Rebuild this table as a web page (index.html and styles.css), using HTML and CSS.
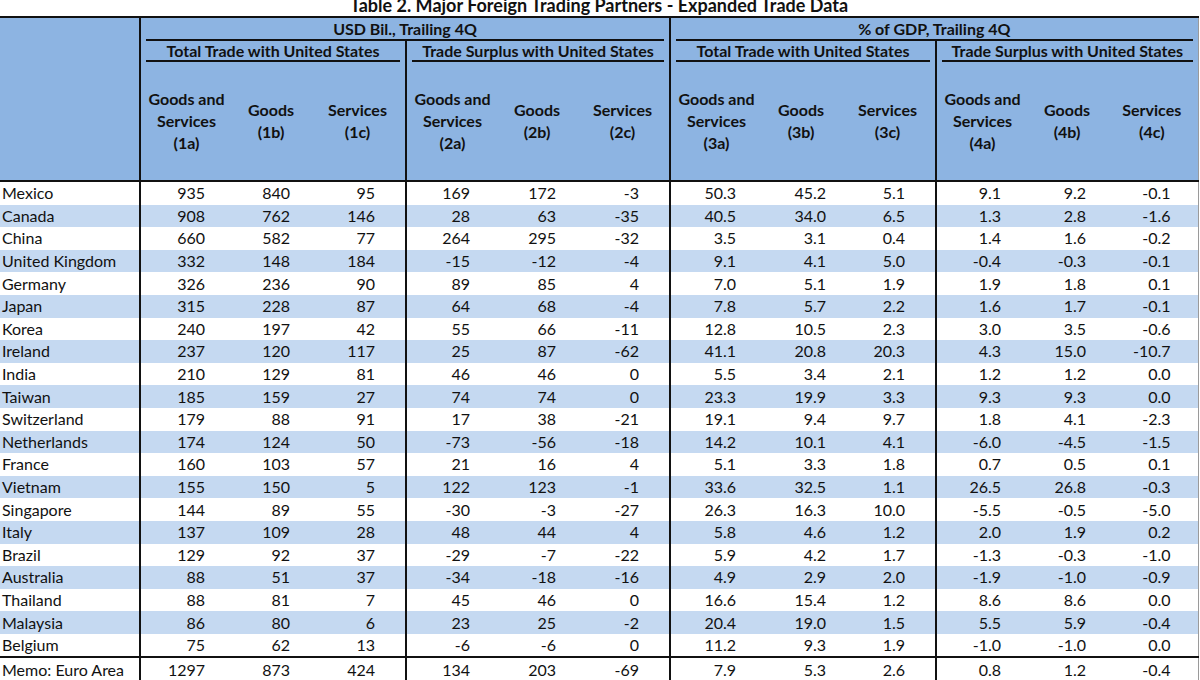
FILE: index.html
```html
<!DOCTYPE html>
<html lang="en">
<head>
<meta charset="utf-8">
<title>Table 2. Major Foreign Trading Partners - Expanded Trade Data</title>
<link rel="stylesheet" href="styles.css">
</head>
<body>
<div class="title">Table 2. Major Foreign Trading Partners - Expanded Trade Data</div>
<table class="trade">
  <colgroup>
    <col class="w-name">
    <col class="w-a"><col class="w-b"><col class="w-c">
    <col class="w-a"><col class="w-b"><col class="w-c2">
    <col class="w-a"><col class="w-b"><col class="w-c">
    <col class="w-a"><col class="w-b"><col class="w-c4">
  </colgroup>
  <thead>
    <tr class="h1">
      <th class="corner" rowspan="3"></th>
      <th class="grp sep" colspan="6"><div class="ul">USD Bil., Trailing 4Q</div></th>
      <th class="grp sep" colspan="6"><div class="ul">% of GDP, Trailing 4Q</div></th>
    </tr>
    <tr class="h2">
      <th class="grp sep" colspan="3"><div class="ul">Total Trade with United States</div></th>
      <th class="grp sep" colspan="3"><div class="ul">Trade Surplus with United States</div></th>
      <th class="grp sep" colspan="3"><div class="ul">Total Trade with United States</div></th>
      <th class="grp sep" colspan="3"><div class="ul">Trade Surplus with United States</div></th>
    </tr>
    <tr class="h3">
      <th class="sep">Goods and<br>Services<br>(1a)</th><th>Goods<br>(1b)</th><th>Services<br>(1c)</th>
      <th class="sep">Goods and<br>Services<br>(2a)</th><th>Goods<br>(2b)</th><th>Services<br>(2c)</th>
      <th class="sep">Goods and<br>Services<br>(3a)</th><th>Goods<br>(3b)</th><th>Services<br>(3c)</th>
      <th class="sep">Goods and<br>Services<br>(4a)</th><th>Goods<br>(4b)</th><th>Services<br>(4c)</th>
    </tr>
  </thead>
  <tbody>
    <tr><td>Mexico</td><td>935</td><td>840</td><td>95</td><td>169</td><td>172</td><td>-3</td><td>50.3</td><td>45.2</td><td>5.1</td><td>9.1</td><td>9.2</td><td>-0.1</td></tr>
    <tr class="alt"><td>Canada</td><td>908</td><td>762</td><td>146</td><td>28</td><td>63</td><td>-35</td><td>40.5</td><td>34.0</td><td>6.5</td><td>1.3</td><td>2.8</td><td>-1.6</td></tr>
    <tr><td>China</td><td>660</td><td>582</td><td>77</td><td>264</td><td>295</td><td>-32</td><td>3.5</td><td>3.1</td><td>0.4</td><td>1.4</td><td>1.6</td><td>-0.2</td></tr>
    <tr class="alt"><td>United Kingdom</td><td>332</td><td>148</td><td>184</td><td>-15</td><td>-12</td><td>-4</td><td>9.1</td><td>4.1</td><td>5.0</td><td>-0.4</td><td>-0.3</td><td>-0.1</td></tr>
    <tr><td>Germany</td><td>326</td><td>236</td><td>90</td><td>89</td><td>85</td><td>4</td><td>7.0</td><td>5.1</td><td>1.9</td><td>1.9</td><td>1.8</td><td>0.1</td></tr>
    <tr class="alt"><td>Japan</td><td>315</td><td>228</td><td>87</td><td>64</td><td>68</td><td>-4</td><td>7.8</td><td>5.7</td><td>2.2</td><td>1.6</td><td>1.7</td><td>-0.1</td></tr>
    <tr><td>Korea</td><td>240</td><td>197</td><td>42</td><td>55</td><td>66</td><td>-11</td><td>12.8</td><td>10.5</td><td>2.3</td><td>3.0</td><td>3.5</td><td>-0.6</td></tr>
    <tr class="alt"><td>Ireland</td><td>237</td><td>120</td><td>117</td><td>25</td><td>87</td><td>-62</td><td>41.1</td><td>20.8</td><td>20.3</td><td>4.3</td><td>15.0</td><td>-10.7</td></tr>
    <tr><td>India</td><td>210</td><td>129</td><td>81</td><td>46</td><td>46</td><td>0</td><td>5.5</td><td>3.4</td><td>2.1</td><td>1.2</td><td>1.2</td><td>0.0</td></tr>
    <tr class="alt"><td>Taiwan</td><td>185</td><td>159</td><td>27</td><td>74</td><td>74</td><td>0</td><td>23.3</td><td>19.9</td><td>3.3</td><td>9.3</td><td>9.3</td><td>0.0</td></tr>
    <tr><td>Switzerland</td><td>179</td><td>88</td><td>91</td><td>17</td><td>38</td><td>-21</td><td>19.1</td><td>9.4</td><td>9.7</td><td>1.8</td><td>4.1</td><td>-2.3</td></tr>
    <tr class="alt"><td>Netherlands</td><td>174</td><td>124</td><td>50</td><td>-73</td><td>-56</td><td>-18</td><td>14.2</td><td>10.1</td><td>4.1</td><td>-6.0</td><td>-4.5</td><td>-1.5</td></tr>
    <tr><td>France</td><td>160</td><td>103</td><td>57</td><td>21</td><td>16</td><td>4</td><td>5.1</td><td>3.3</td><td>1.8</td><td>0.7</td><td>0.5</td><td>0.1</td></tr>
    <tr class="alt"><td>Vietnam</td><td>155</td><td>150</td><td>5</td><td>122</td><td>123</td><td>-1</td><td>33.6</td><td>32.5</td><td>1.1</td><td>26.5</td><td>26.8</td><td>-0.3</td></tr>
    <tr><td>Singapore</td><td>144</td><td>89</td><td>55</td><td>-30</td><td>-3</td><td>-27</td><td>26.3</td><td>16.3</td><td>10.0</td><td>-5.5</td><td>-0.5</td><td>-5.0</td></tr>
    <tr class="alt"><td>Italy</td><td>137</td><td>109</td><td>28</td><td>48</td><td>44</td><td>4</td><td>5.8</td><td>4.6</td><td>1.2</td><td>2.0</td><td>1.9</td><td>0.2</td></tr>
    <tr><td>Brazil</td><td>129</td><td>92</td><td>37</td><td>-29</td><td>-7</td><td>-22</td><td>5.9</td><td>4.2</td><td>1.7</td><td>-1.3</td><td>-0.3</td><td>-1.0</td></tr>
    <tr class="alt"><td>Australia</td><td>88</td><td>51</td><td>37</td><td>-34</td><td>-18</td><td>-16</td><td>4.9</td><td>2.9</td><td>2.0</td><td>-1.9</td><td>-1.0</td><td>-0.9</td></tr>
    <tr><td>Thailand</td><td>88</td><td>81</td><td>7</td><td>45</td><td>46</td><td>0</td><td>16.6</td><td>15.4</td><td>1.2</td><td>8.6</td><td>8.6</td><td>0.0</td></tr>
    <tr class="alt"><td>Malaysia</td><td>86</td><td>80</td><td>6</td><td>23</td><td>25</td><td>-2</td><td>20.4</td><td>19.0</td><td>1.5</td><td>5.5</td><td>5.9</td><td>-0.4</td></tr>
    <tr><td>Belgium</td><td>75</td><td>62</td><td>13</td><td>-6</td><td>-6</td><td>0</td><td>11.2</td><td>9.3</td><td>1.9</td><td>-1.0</td><td>-1.0</td><td>0.0</td></tr>
    <tr class="memo"><td>Memo: Euro Area</td><td>1297</td><td>873</td><td>424</td><td>134</td><td>203</td><td>-69</td><td>7.9</td><td>5.3</td><td>2.6</td><td>0.8</td><td>1.2</td><td>-0.4</td></tr>
  </tbody>
</table>
</body>
</html>
```

FILE: styles.css
```css
html, body {
  margin: 0;
  padding: 0;
  background: #ffffff;
}

body {
  font-family: Lato, "Open Sans", sans-serif;
  color: #111111;
  width: 1200px;
  height: 680px;
  overflow: hidden;
}

.title {
  margin-top: -5px;
  height: 21px;
  line-height: 20px;
  font-size: 18px;
  font-weight: 700;
  text-align: center;
  padding-right: 2px;
  box-sizing: border-box;
  white-space: nowrap;
}

.trade {
  border-collapse: collapse;
  table-layout: fixed;
  width: 1198px;
  font-size: 16px;
}

.w-name { width: 140px; }
.w-a { width: 92px; }
.w-b { width: 78px; }
.w-c { width: 96px; }
.w-c2 { width: 94px; }
.w-c4 { width: 92px; }

.trade thead th {
  background: #8db4e2;
  font-weight: 700;
  padding: 0;
  text-align: center;
  vertical-align: middle;
  color: #111111;
}

.trade thead tr.h1 th {
  border-top: 2px solid #111111;
}

.trade th.corner {
  border-top: 2px solid #111111;
  border-right: 2px solid #111111;
  border-bottom: 2px solid #111111;
}

.trade .sep {
  border-left: 2px solid #111111;
}

.trade thead tr.h1 th.grp:last-child,
.trade thead tr.h2 th.grp:last-child,
.trade thead tr.h3 th:last-child {
  border-right: 1px solid #9a9a9a;
}

.ul {
  margin: 0 5px;
  border-bottom: 2px solid #111111;
}

tr.h1 .ul {
  height: 21px;
  line-height: 21px;
}

tr.h2 .ul {
  height: 19px;
  line-height: 19px;
}

tr.h3 th {
  height: 118px;
  line-height: 22px;
  border-bottom: 2px solid #111111;
}

.trade tbody td {
  height: 22.6px;
  padding: 0;
  line-height: 20px;
  text-align: right;
  white-space: nowrap;
}

.trade tbody tr.alt td {
  background: #c5d9f1;
}

.trade tbody td:first-child {
  text-align: left;
  padding-left: 2px;
  border-right: 2px solid #111111;
}

.trade tbody td:nth-child(2),
.trade tbody td:nth-child(5),
.trade tbody td:nth-child(8),
.trade tbody td:nth-child(11) {
  border-left: 2px solid #111111;
}

.trade tbody td:last-child {
  border-right: 1px solid #9a9a9a;
}

.trade tbody td:nth-child(2) { padding-right: 27px; }
.trade tbody td:nth-child(3) { padding-right: 20px; }
.trade tbody td:nth-child(4) { padding-right: 30px; }
.trade tbody td:nth-child(5) { padding-right: 28px; }
.trade tbody td:nth-child(6) { padding-right: 20px; }
.trade tbody td:nth-child(7) { padding-right: 30px; }
.trade tbody td:nth-child(8) { padding-right: 26px; }
.trade tbody td:nth-child(9) { padding-right: 14px; }
.trade tbody td:nth-child(10) { padding-right: 30px; }
.trade tbody td:nth-child(11) { padding-right: 27px; }
.trade tbody td:nth-child(12) { padding-right: 20px; }
.trade tbody td:nth-child(13) { padding-right: 27px; }

.trade tbody tr.memo td {
  border-top: 2px solid #111111;
}

.trade tbody tr.memo td {
  line-height: 17px;
}
```
